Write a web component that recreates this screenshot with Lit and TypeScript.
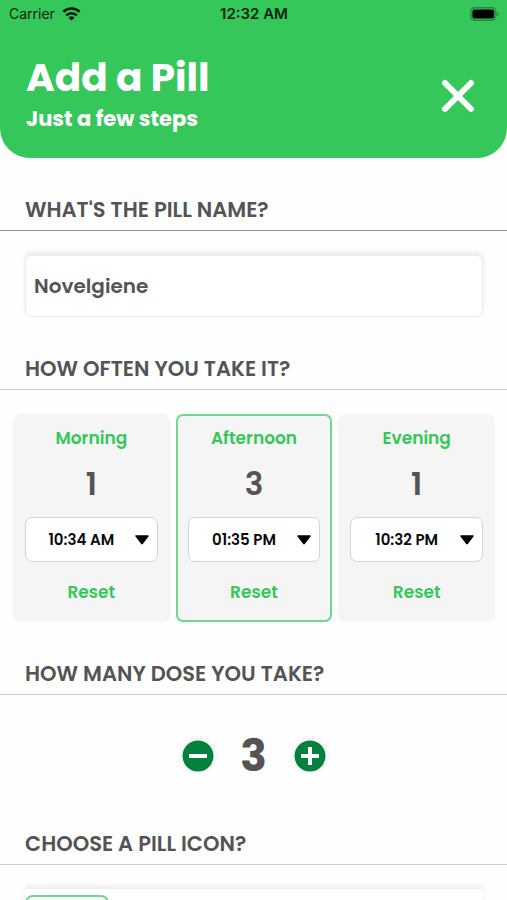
import { LitElement, html, css, svg } from "lit";
import { customElement, property, state } from "lit/decorators.js";

interface Slot {
  label: string;
  count: number;
  time: string;
}

const TIMES = ["10:34 AM", "01:35 PM", "10:32 PM"];

@customElement("status-bar")
class StatusBar extends LitElement {
  static styles = css`
    :host {
      display: grid;
      grid-template-columns: 1fr auto 1fr;
      align-items: center;
      height: 28px;
      padding: 0 8px 0 9px;
      color: #0b2412;
      font-family: Inter, "Liberation Sans", sans-serif;
      font-size: 14px;
      line-height: 20px;
    }
    .carrier {
      display: flex;
      align-items: center;
      gap: 7px;
    }
    .time {
      font-size: 15px;
      font-weight: 600;
    }
    .battery {
      justify-self: end;
    }
    svg {
      display: block;
    }
  `;
  render() {
    return html`
      <span class="carrier">
        Carrier
        <svg width="19" height="14" viewBox="0 0 18 14" aria-label="Wi-Fi" fill="none" stroke="#041a09" stroke-width="2.7">
          <path d="M.9 4.8A11.6 11.6 0 0 1 17.1 4.8" />
          <path d="M3.7 8.4A7.6 7.6 0 0 1 14.3 8.4" />
          <path d="M9 13.6 6 10.7A4.3 4.3 0 0 1 12 10.7Z" fill="#041a09" stroke="none" />
        </svg>
      </span>
      <span class="time">12:32 AM</span>
      <svg class="battery" width="29" height="14" viewBox="0 0 29 14" aria-label="Battery full">
        <rect x=".8" y=".8" width="25" height="12.4" rx="4" fill="none" stroke="#1f8a3c" stroke-width="1.4" />
        <rect x="2.4" y="2.4" width="21.8" height="9.2" rx="2.2" fill="#000" />
        <path d="M27.2 5v4q1.4-.6 1.4-2t-1.4-2Z" fill="#1f8a3c" />
      </svg>
    `;
  }
}

@customElement("form-section")
class FormSection extends LitElement {
  @property() heading = "";
  @property({ type: Boolean }) strong = false;
  static styles = css`
    :host {
      display: block;
      padding-top: 40px;
    }
    .heading {
      margin: 0 0 24px;
      padding: 0 25px 8px;
      border-bottom: 1px solid #cbcbcb;
      color: #545454;
      font-size: 21px;
      font-weight: 600;
      line-height: 24px;
    }
    .strong {
      border-color: #8c8c8c;
    }
  `;
  render() {
    return html`
      <h2 class="heading ${this.strong ? "strong" : ""}">${this.heading}</h2>
      <slot></slot>
    `;
  }
}

@customElement("app-root")
class AppRoot extends LitElement {
  @state() private slots: Slot[] = [
    { label: "Morning", count: 1, time: "10:34 AM" },
    { label: "Afternoon", count: 3, time: "01:35 PM" },
    { label: "Evening", count: 1, time: "10:32 PM" },
  ];
  @state() private active = 1;
  @state() private dose = 3;

  static styles = css`
    :host {
      display: flex;
      flex-direction: column;
      height: 100vh;
      background: #fefefe;
      color: #545454;
      font-family: Poppins, Inter, "Open Sans", sans-serif;
    }
    button,
    input,
    select {
      font: inherit;
      color: inherit;
      margin: 0;
    }
    button {
      padding: 0;
      border: 0;
      background: none;
      cursor: pointer;
    }
    svg {
      display: block;
    }
    .top {
      flex: none;
      background: #35c759;
      border-radius: 0 0 30px 30px;
      color: #fff;
    }
    .bar {
      display: flex;
      align-items: center;
      justify-content: space-between;
      padding: 24px 31px 24px 26px;
    }
    .title {
      margin: 0;
      font-size: 39px;
      font-weight: 700;
      line-height: 52px;
    }
    .subtitle {
      margin: 0;
      font-size: 21px;
      font-weight: 700;
      line-height: 30px;
    }
    .close {
      padding-top: 6px;
    }
    .body {
      flex: 1;
      min-height: 0;
      overflow-y: auto;
      scrollbar-width: none;
    }
    .name {
      padding: 0 24px 0 25px;
    }
    .field {
      box-sizing: border-box;
      display: block;
      width: 100%;
      height: 62px;
      padding: 0 8px;
      border: 1px solid #ececec;
      border-radius: 6px;
      background: #fff;
      box-shadow: 0 -3px 5px rgba(0, 0, 0, 0.08);
      font-size: 20px;
      font-weight: 600;
      outline: none;
    }
    .cards {
      display: grid;
      grid-template-columns: repeat(3, 1fr);
      gap: 6px;
      padding: 0 12px 0 13px;
    }
    .card {
      display: flex;
      flex-direction: column;
      align-items: center;
      padding: 10px 10px 16px;
      border: 2px solid #f5f5f5;
      border-radius: 7px;
      background: #f5f5f5;
    }
    .active {
      border-color: #6fd88a;
    }
    .label,
    .reset {
      color: #35c759;
      font-size: 17px;
      font-weight: 600;
      line-height: 24px;
    }
    .count {
      margin: 16px 0 15px;
      font-size: 31px;
      font-weight: 600;
      line-height: 36px;
    }
    .picker {
      display: grid;
      align-items: center;
      width: 100%;
      margin-bottom: 18px;
    }
    .time,
    .caret {
      grid-area: 1 / 1;
    }
    .time {
      box-sizing: border-box;
      width: 100%;
      height: 45px;
      padding: 0 20px 0 0;
      border: 1px solid #d4d4d4;
      border-radius: 7px;
      background: #fff;
      appearance: none;
      color: #0a0a0a;
      font-size: 15px;
      font-weight: 600;
      text-align: center;
      text-align-last: center;
    }
    .caret {
      justify-self: end;
      margin-right: 9px;
      pointer-events: none;
    }
    .dose {
      display: flex;
      align-items: center;
      justify-content: center;
      gap: 26px;
      height: 73px;
    }
    .round {
      border-radius: 50%;
      box-shadow: 0 -2px 6px rgba(0, 0, 0, 0.08);
    }
    .amount {
      min-width: 28px;
      font-size: 44px;
      font-weight: 700;
      line-height: 52px;
      text-align: center;
    }
    .icons {
      display: flex;
      min-height: 96px;
      margin: 0 24px 0 25px;
      padding-top: 6px;
      background: #fff;
      box-shadow: 0 -3px 5px rgba(0, 0, 0, 0.08);
    }
    .choice {
      width: 84px;
      height: 84px;
      border: 2px solid #6fd88a;
      border-radius: 8px;
    }
  `;

  private patchSlot(i: number, patch: Partial<Slot>) {
    this.slots = this.slots.map((s, n) => (n === i ? { ...s, ...patch } : s));
  }

  private renderCard(slot: Slot, i: number) {
    return html`
      <div class="card ${i === this.active ? "active" : ""}" @click=${() => (this.active = i)}>
        <label class="label" for="time-${i}">${slot.label}</label>
        <span class="count">${slot.count}</span>
        <div class="picker">
          <select
            class="time"
            id="time-${i}"
            @change=${(e: Event) => this.patchSlot(i, { time: (e.target as HTMLSelectElement).value })}
          >
            ${TIMES.map((t) => html`<option ?selected=${t === slot.time}>${t}</option>`)}
          </select>
          <svg class="caret" width="14" height="10" viewBox="0 0 14 10" aria-hidden="true">
            <path d="M1 .3h12q1.2.1.5 1.1L7.8 9q-.8.8-1.6 0L.5 1.4Q-.2.4 1 .3Z" fill="#000" />
          </svg>
        </div>
        <button class="reset" type="button" @click=${() => this.patchSlot(i, { count: 0 })}>Reset</button>
      </div>
    `;
  }

  private renderRound(label: string, step: number, sign: unknown) {
    return html`
      <button
        class="round"
        type="button"
        aria-label=${label}
        @click=${() => (this.dose = Math.max(0, this.dose + step))}
      >
        <svg width="32" height="32" viewBox="0 0 32 32">
          <circle cx="16" cy="16" r="15.5" fill="#04803f" />
          ${sign}
        </svg>
      </button>
    `;
  }

  render() {
    return html`
      <header class="top">
        <status-bar></status-bar>
        <div class="bar">
          <div>
            <h1 class="title">Add a Pill</h1>
            <p class="subtitle">Just a few steps</p>
          </div>
          <button class="close" type="button" aria-label="Close">
            <svg width="36" height="36" viewBox="0 0 36 36" fill="none" stroke="#fff" stroke-width="6" stroke-linecap="round">
              <path d="M5 5 31 31M31 5 5 31" />
            </svg>
          </button>
        </div>
      </header>
      <main class="body">
        <form-section heading="WHAT'S THE PILL NAME?" strong>
          <div class="name">
            <input class="field" type="text" aria-label="Pill name" value="Novelgiene" />
          </div>
        </form-section>
        <form-section heading="HOW OFTEN YOU TAKE IT?">
          <div class="cards">${this.slots.map((s, i) => this.renderCard(s, i))}</div>
        </form-section>
        <form-section heading="HOW MANY DOSE YOU TAKE?">
          <div class="dose">
            ${this.renderRound("Less", -1, svg`<path d="M7 16h18" stroke="#fff" stroke-width="4" />`)}
            <span class="amount">${this.dose}</span>
            ${this.renderRound("More", 1, svg`<path d="M7 16h18M16 7v18" stroke="#fff" stroke-width="4" />`)}
          </div>
        </form-section>
        <form-section heading="CHOOSE A PILL ICON?">
          <div class="icons">
            <button class="choice" type="button" aria-label="Pill icon"></button>
          </div>
        </form-section>
      </main>
    `;
  }
}
